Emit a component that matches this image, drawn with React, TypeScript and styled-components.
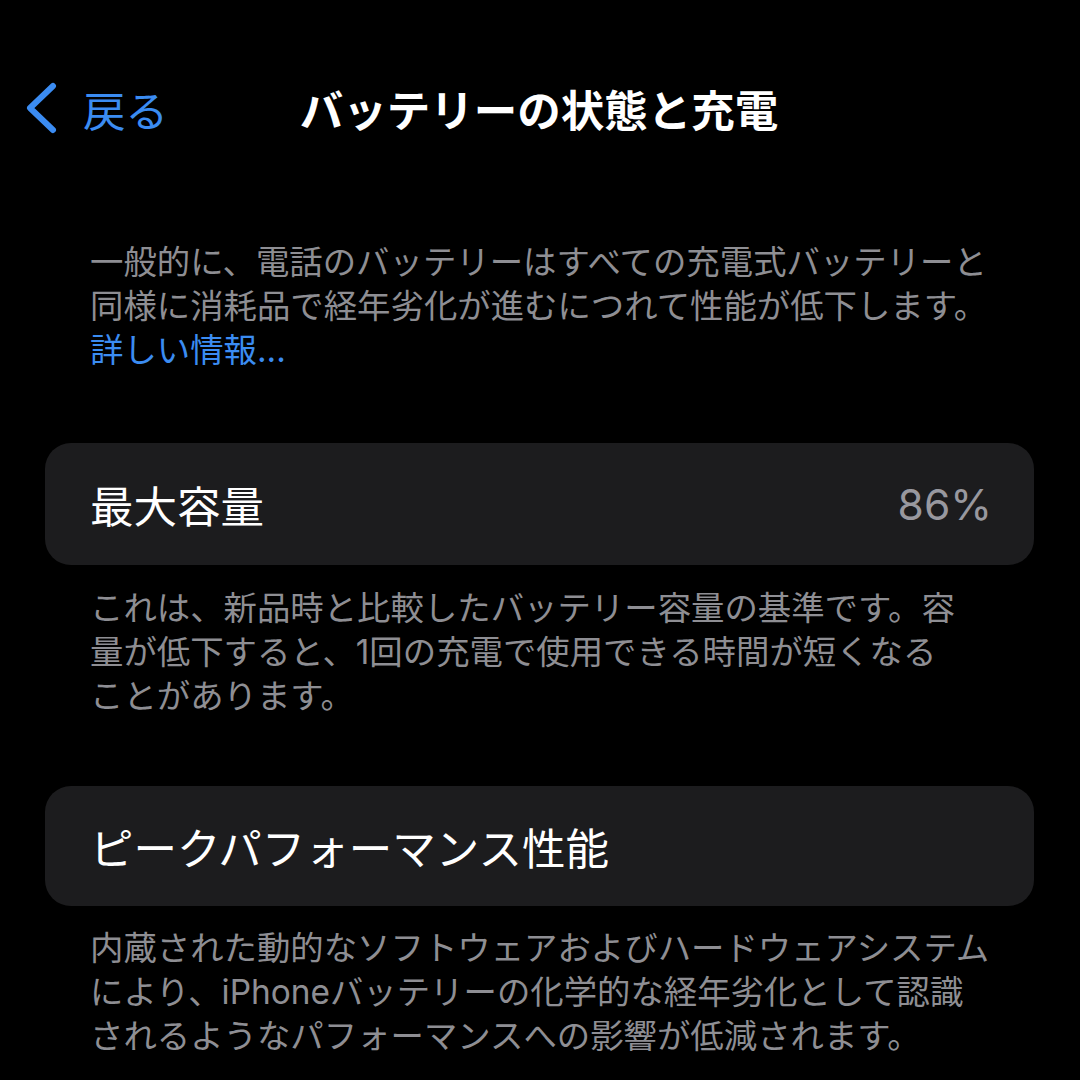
import React, { ReactElement } from "react"
import styled, { createGlobalStyle } from "styled-components"

const FONT_STACK = `Inter, "Noto Sans CJK JP", "Noto Sans", sans-serif`

const GlobalStyle = createGlobalStyle`
  html, body {
    margin: 0;
    padding: 0;
    background: #000;
  }
  body {
    font-family: ${FONT_STACK};
    -webkit-font-smoothing: antialiased;
  }
`

const Screen = styled.div`
  width: 1080px;
  height: 1080px;
  overflow: hidden;
  background: #000;
  padding: 64px 46px 0 45px;
  box-sizing: border-box;
`

// Nav = Back + Title + spacer, title centred over the whole bar
const NavBar = styled.div`
  display: grid;
  grid-template-columns: 1fr auto 1fr;
  align-items: center;
  height: 88px;
  margin: 0 -46px 0 -45px;
  padding: 0 0 0 24px;
`

const BackButton = styled.button`
  display: flex;
  align-items: center;
  gap: 25px;
  background: none;
  border: none;
  padding: 0;
  color: #3b8cf2;
  font-family: ${FONT_STACK};
  font-size: 42.5px;
  cursor: pointer;
  justify-self: start;
`

const Title = styled.h1`
  margin: 0 0 0 -26px;
  color: #fff;
  font-size: 43.5px;
  font-weight: 700;
  letter-spacing: 0;
`

const Paragraph = styled.p<{ $top: number }>`
  margin: ${(p) => p.$top}px 0 0;
  padding: 0 45px;
  color: #8e8e93;
  font-size: 33.4px;
  line-height: 44px;
  white-space: nowrap;
`

const Link = styled.span`
  color: #3b8cf2;
`

const Card = styled.div<{ $top: number; $height: number }>`
  margin-top: ${(p) => p.$top}px;
  height: ${(p) => p.$height}px;
  background: #1c1c1e;
  border-radius: 26px;
  display: flex;
  align-items: center;
  justify-content: space-between;
  padding: 0 42px 0 45px;
`

const Label = styled.span`
  color: #fff;
  font-size: 43.5px;
`

const Value = styled.span`
  color: #98989f;
  font-size: 42.5px;
`

const Chevron = (): ReactElement => (
  <svg width="34" height="52" viewBox="0 0 34 52">
    <path
      d="M29 4 L6 26 L29 48"
      fill="none"
      stroke="#3b8cf2"
      strokeWidth="6"
      strokeLinecap="round"
      strokeLinejoin="round"
    />
  </svg>
)

const App = (): ReactElement => (
  <>
    <GlobalStyle />
    <Screen>
      <NavBar>
        <BackButton>
          <Chevron />
          戻る
        </BackButton>
        <Title>バッテリーの状態と充電</Title>
        <span />
      </NavBar>

      <Paragraph $top={88}>
        一般的に、電話のバッテリーはすべての充電式バッテリーと
        <br />
        同様に消耗品で経年劣化が進むにつれて性能が低下します。
        <br />
        <Link>詳しい情報...</Link>
      </Paragraph>

      <Card $top={71} $height={122}>
        <Label>最大容量</Label>
        <Value>86%</Value>
      </Card>

      <Paragraph $top={21}>
        これは、新品時と比較したバッテリー容量の基準です。容
        <br />
        量が低下すると、1回の充電で使用できる時間が短くなる
        <br />
        ことがあります。
      </Paragraph>

      <Card $top={68} $height={120}>
        <Label>ピークパフォーマンス性能</Label>
      </Card>

      <Paragraph $top={20}>
        内蔵された動的なソフトウェアおよびハードウェアシステム
        <br />
        により、iPhoneバッテリーの化学的な経年劣化として認識
        <br />
        されるようなパフォーマンスへの影響が低減されます。
      </Paragraph>
    </Screen>
  </>
)

export default App
